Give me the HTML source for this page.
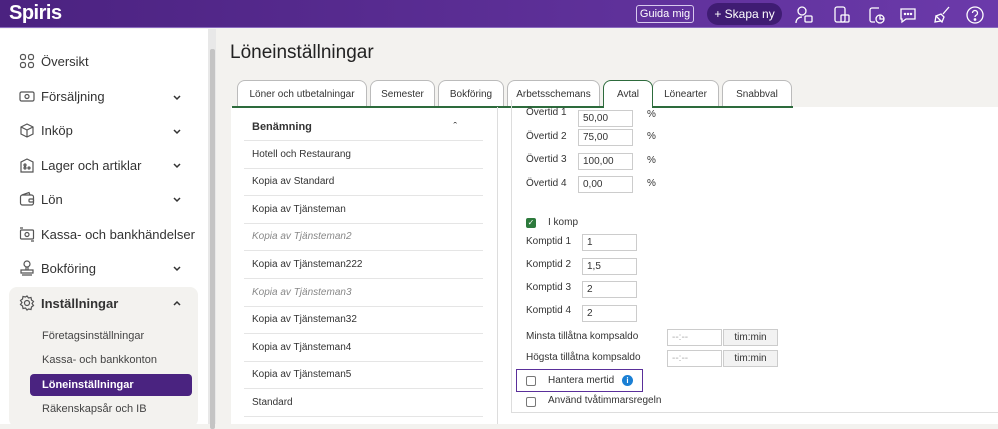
<!DOCTYPE html>
<html><head><meta charset="utf-8"><style>
*{box-sizing:border-box;margin:0;padding:0}
body{width:998px;height:424px;overflow:hidden;font-family:"Liberation Sans",sans-serif;background:#f3f2ef;position:relative;color:#333}
.top{position:absolute;left:0;top:0;width:998px;height:28px;background:linear-gradient(90deg,#4b2280,#6b3aaa);border-bottom:1px solid #8a6bbf}
.logo{position:absolute;left:9px;top:2px;color:#fff;font-weight:bold;font-size:20px;letter-spacing:-0.5px}
.guida{position:absolute;left:636px;top:5px;width:58px;height:18px;border:1px solid #d8c9ee;border-radius:3px;color:#fff;font-size:11px;text-align:center;line-height:16px}
.skapa{position:absolute;left:707px;top:3px;width:75px;height:22px;background:#3f1c73;border-radius:11px;color:#fff;font-size:12px;line-height:22px;text-align:center}
.ic{position:absolute;top:5px}
.side{position:absolute;left:0;top:29px;width:208px;height:395px;background:#fff}
.sb{position:absolute;left:208px;top:29px;width:8px;height:395px;background:#e8e8e8}
.sb i{position:absolute;left:2px;top:20px;width:5px;height:380px;background:#c4c4c4;border-radius:2px}
.nav{position:absolute;left:19px;font-size:13px;color:#333;display:flex;align-items:center}
.nav svg{margin-right:6px}
.chev{position:absolute;left:172px}
.set{position:absolute;left:9px;top:287px;width:189px;height:140px;background:#f3f2ef;border-radius:8px}
.sub{position:absolute;left:42px;font-size:11px;color:#444}
.act{position:absolute;left:30px;top:374px;width:162px;height:22px;background:#4a2380;border-radius:4px;color:#fff;font-weight:bold;font-size:11px;line-height:22px;padding-left:12px}
h1{position:absolute;left:230px;top:42px;font-weight:normal;font-size:19px;color:#222}
.tab{position:absolute;top:80px;height:27px;border:1px solid #bbb;border-bottom:none;border-radius:8px 8px 0 0;background:#fff;font-size:10px;color:#333;text-align:center;line-height:28px}
.tab.a{border:1.5px solid #2d6b3c;border-bottom:none}
.gl{position:absolute;left:232px;top:106px;width:561px;height:1.5px;background:#2d6b3c}
.panel{position:absolute;left:231px;top:107px;width:767px;height:317px;background:#fff}
.lp{position:absolute;left:231px;top:107px;width:267px;height:317px;border-right:1px solid #ddd}
.row{position:absolute;left:244px;width:239px;height:28px;border-bottom:1px solid #e5e5e5;font-size:10px;line-height:28px;padding-left:8px;color:#333}
.row.g{color:#888;font-style:italic}
.rp{position:absolute;left:511px;top:100px;width:487px;height:313px;border:1px solid #ddd;border-top:none;border-right:none}
.lbl{position:absolute;font-size:10px;color:#333}
.inp{position:absolute;width:55px;height:17px;border:1px solid #ccc;font-size:10px;line-height:16px;padding-left:4px}
.cb{position:absolute;width:10px;height:10px;border:1px solid #777;border-radius:2px;background:#fff}
.btn{position:absolute;width:55px;height:17px;border:1px solid #ccc;background:#f2f2f2;font-size:10px;text-align:center;line-height:16px}
</style></head><body>
<div class="top"><div class="logo">Spiris</div>
<div class="guida">Guida mig</div><div class="skapa">+ Skapa ny</div>
<svg class="ic" style="left:794px" width="20" height="20" viewBox="0 0 20 20" fill="none" stroke="#fff" stroke-width="1.3"><circle cx="8" cy="6" r="4"/><path d="M2 18c0-4 3-6 6-6"/><rect x="11" y="11" width="7" height="6" rx="1"/></svg>
<svg class="ic" style="left:832px" width="20" height="20" viewBox="0 0 20 20" fill="none" stroke="#fff" stroke-width="1.3"><rect x="3" y="2" width="10" height="15" rx="2"/><rect x="9" y="10" width="8" height="7" rx="1"/></svg>
<svg class="ic" style="left:866px" width="20" height="20" viewBox="0 0 20 20" fill="none" stroke="#fff" stroke-width="1.3"><path d="M13 3H6a2 2 0 0 0-2 2v10a2 2 0 0 0 2 2h3"/><circle cx="14" cy="14" r="4"/><path d="M14 10v4h4"/></svg>
<svg class="ic" style="left:898px" width="20" height="20" viewBox="0 0 20 20" fill="none" stroke="#fff" stroke-width="1.3"><path d="M3 4h14v10H8l-4 3v-3H3z"/><circle cx="7" cy="9" r=".6" fill="#fff"/><circle cx="10" cy="9" r=".6" fill="#fff"/><circle cx="13" cy="9" r=".6" fill="#fff"/></svg>
<svg class="ic" style="left:932px" width="20" height="20" viewBox="0 0 20 20" fill="none" stroke="#fff" stroke-width="1.3"><path d="M17 2l-6 7M4 11l5-2 3 3-2 5-6-6zM4 11l-1 6 6-1"/></svg>
<svg class="ic" style="left:965px" width="20" height="20" viewBox="0 0 20 20" fill="none" stroke="#fff" stroke-width="1.3"><circle cx="10" cy="10" r="8"/><path d="M7.5 8a2.5 2.5 0 1 1 3.5 2.3c-.7.4-1 .9-1 1.7"/><circle cx="10" cy="14.5" r=".7" fill="#fff"/></svg>
</div>
<div class="side"></div>
<div class="sb"><i></i></div>
<div class="nav" style="top:53px"><svg width="16" height="16" viewBox="0 0 16 16" fill="none" stroke="#555" stroke-width="1.2"><rect x="1.5" y="1.5" width="5" height="5" rx="2"/><rect x="9.5" y="1.5" width="5" height="5" rx="2"/><rect x="1.5" y="9.5" width="5" height="5" rx="2"/><rect x="9.5" y="9.5" width="5" height="5" rx="2"/></svg>Översikt</div>
<div class="nav" style="top:88px"><svg width="16" height="16" viewBox="0 0 16 16" fill="none" stroke="#555" stroke-width="1.2"><rect x="1" y="4" width="14" height="9" rx="1.5"/><circle cx="8" cy="8.5" r="2"/></svg>Försäljning</div>
<div class="nav" style="top:122px"><svg width="16" height="16" viewBox="0 0 16 16" fill="none" stroke="#555" stroke-width="1.2"><path d="M2 5l6-3 6 3v7l-6 3-6-3zM2 5l6 3 6-3M8 8v7"/></svg>Inköp</div>
<div class="nav" style="top:157px"><svg width="16" height="16" viewBox="0 0 16 16" fill="none" stroke="#555" stroke-width="1.2"><path d="M2 15V5l6-3 6 3v10z"/><circle cx="6" cy="11" r="1"/><circle cx="10" cy="11" r="1"/><circle cx="6" cy="8" r="1"/></svg>Lager och artiklar</div>
<div class="nav" style="top:191px"><svg width="16" height="16" viewBox="0 0 16 16" fill="none" stroke="#555" stroke-width="1.2"><rect x="1.5" y="4" width="13" height="10" rx="2"/><path d="M3 4l7-2.5 1 2.5"/><rect x="10" y="8" width="4.5" height="3" rx="1"/></svg>Lön</div>
<div class="nav" style="top:226px"><svg width="16" height="16" viewBox="0 0 16 16" fill="none" stroke="#555" stroke-width="1.2"><rect x="1.5" y="4" width="13" height="9" rx="1"/><circle cx="8" cy="8.5" r="2"/><path d="M1 2h3M12 15h3"/></svg>Kassa- och bankhändelser</div>
<div class="nav" style="top:260px"><svg width="16" height="16" viewBox="0 0 16 16" fill="none" stroke="#555" stroke-width="1.2"><circle cx="8" cy="4" r="3"/><path d="M7 7v3M9 7v3M2 10h12v3H2zM3 15h10"/></svg>Bokföring</div>
<div class="set"></div>
<div class="nav" style="top:295px;font-weight:bold"><svg width="16" height="16" viewBox="0 0 16 16" fill="none" stroke="#555" stroke-width="1.2"><circle cx="8" cy="8" r="2.5"/><path d="M8 1l1.5 2 2.5-.5.5 2.5 2 1.5-1.5 2 1.5 2-2 1.5-.5 2.5-2.5-.5L8 15l-1.5-2-2.5.5-.5-2.5-2-1.5 1.5-2-1.5-2 2-1.5.5-2.5 2.5.5z"/></svg>Inställningar</div>
<svg class="chev" style="top:94px" width="10" height="8" viewBox="0 0 10 8" fill="none" stroke="#333" stroke-width="1.5"><path d="M2 2l3 3 3-3"/></svg>
<svg class="chev" style="top:128px" width="10" height="8" viewBox="0 0 10 8" fill="none" stroke="#333" stroke-width="1.5"><path d="M2 2l3 3 3-3"/></svg>
<svg class="chev" style="top:162px" width="10" height="8" viewBox="0 0 10 8" fill="none" stroke="#333" stroke-width="1.5"><path d="M2 2l3 3 3-3"/></svg>
<svg class="chev" style="top:196px" width="10" height="8" viewBox="0 0 10 8" fill="none" stroke="#333" stroke-width="1.5"><path d="M2 2l3 3 3-3"/></svg>
<svg class="chev" style="top:265px" width="10" height="8" viewBox="0 0 10 8" fill="none" stroke="#333" stroke-width="1.5"><path d="M2 2l3 3 3-3"/></svg>
<svg class="chev" style="top:299px" width="10" height="8" viewBox="0 0 10 8" fill="none" stroke="#333" stroke-width="1.5"><path d="M2 6l3-3 3 3"/></svg>
<div class="sub" style="top:330px">Företagsinställningar</div>
<div class="sub" style="top:354px">Kassa- och bankkonton</div>
<div class="act">Löneinställningar</div>
<div class="sub" style="top:403px">Räkenskapsår och IB</div>
<h1>Löneinställningar</h1>
<div class="panel"></div>
<div class="tab" style="left:237px;width:130px">Löner och utbetalningar</div>
<div class="tab" style="left:370px;width:65px">Semester</div>
<div class="tab" style="left:438px;width:66px">Bokföring</div>
<div class="tab" style="left:507px;width:93px">Arbetsschemans</div>
<div class="tab" style="left:652px;width:67px">Lönearter</div>
<div class="tab" style="left:722px;width:70px">Snabbval</div>
<div class="gl"></div>
<div class="tab a" style="left:603px;width:50px;height:28px">Avtal</div>
<div class="lp"></div>
<div class="row" style="top:113px;font-weight:bold;font-size:11px">Benämning<span style="position:absolute;right:26px;font-weight:normal">ˆ</span></div>
<div class="row" style="top:141px">Hotell och Restaurang</div>
<div class="row" style="top:168px">Kopia av Standard</div>
<div class="row" style="top:196px">Kopia av Tjänsteman</div>
<div class="row g" style="top:223px">Kopia av Tjänsteman2</div>
<div class="row" style="top:251px">Kopia av Tjänsteman222</div>
<div class="row g" style="top:279px">Kopia av Tjänsteman3</div>
<div class="row" style="top:306px">Kopia av Tjänsteman32</div>
<div class="row" style="top:334px">Kopia av Tjänsteman4</div>
<div class="row" style="top:361px">Kopia av Tjänsteman5</div>
<div class="row" style="top:389px">Standard</div>
<div class="rp"></div>
<div class="lbl" style="left:526px;top:107px">Övertid 1</div><div class="inp" style="left:578px;top:110px">50,00</div><div class="lbl" style="left:647px;top:109px">%</div>
<div class="lbl" style="left:526px;top:131px">Övertid 2</div><div class="inp" style="left:578px;top:129px">75,00</div><div class="lbl" style="left:647px;top:131px">%</div>
<div class="lbl" style="left:526px;top:154px">Övertid 3</div><div class="inp" style="left:578px;top:153px">100,00</div><div class="lbl" style="left:647px;top:155px">%</div>
<div class="lbl" style="left:526px;top:178px">Övertid 4</div><div class="inp" style="left:578px;top:176px">0,00</div><div class="lbl" style="left:647px;top:178px">%</div>
<div class="cb" style="left:526px;top:218px;background:#2d7a3c;border-color:#2d7a3c;color:#fff;font-size:8px;line-height:8px;text-align:center">✓</div><div class="lbl" style="left:548px;top:217px">I komp</div>
<div class="lbl" style="left:526px;top:236px">Komptid 1</div><div class="inp" style="left:582px;top:234px">1</div>
<div class="lbl" style="left:526px;top:259px">Komptid 2</div><div class="inp" style="left:582px;top:258px">1,5</div>
<div class="lbl" style="left:526px;top:282px">Komptid 3</div><div class="inp" style="left:582px;top:281px">2</div>
<div class="lbl" style="left:526px;top:305px">Komptid 4</div><div class="inp" style="left:582px;top:305px">2</div>
<div class="lbl" style="left:526px;top:331px">Minsta tillåtna kompsaldo</div><div class="inp" style="left:667px;top:329px;color:#aaa">--:--</div><div class="btn" style="left:723px;top:329px">tim:min</div>
<div class="lbl" style="left:526px;top:352px">Högsta tillåtna kompsaldo</div><div class="inp" style="left:667px;top:350px;color:#aaa">--:--</div><div class="btn" style="left:723px;top:350px">tim:min</div>
<div style="position:absolute;left:516px;top:369px;width:127px;height:23px;border:1.5px solid #5a2f9a"></div>
<div class="cb" style="left:526px;top:376px"></div><div class="lbl" style="left:548px;top:375px">Hantera mertid</div>
<div style="position:absolute;left:622px;top:375px;width:11px;height:11px;border-radius:50%;background:#1a7fd4;color:#fff;font-size:8px;font-weight:bold;text-align:center;line-height:11px">i</div>
<div class="cb" style="left:526px;top:397px"></div><div class="lbl" style="left:548px;top:395px">Använd tvåtimmarsregeln</div>
</body></html>
